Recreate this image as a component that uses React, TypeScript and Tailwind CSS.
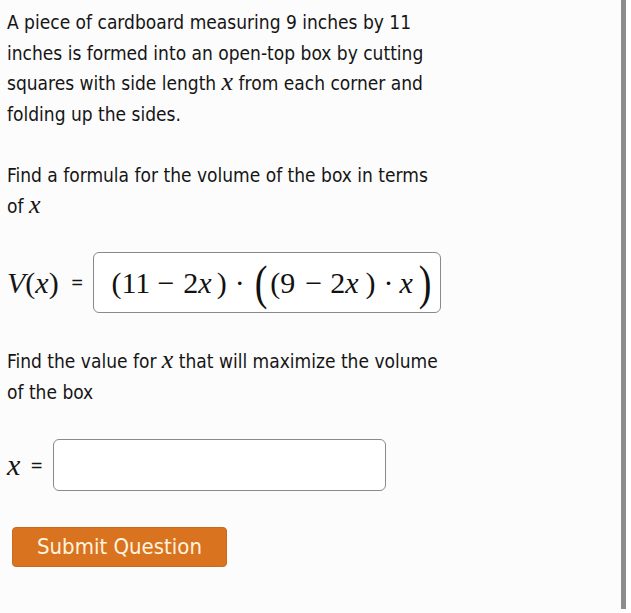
import React from "react";

function MathX() {
  return <i className="font-['Liberation_Serif',serif] text-[26px] italic leading-none">x</i>;
}

export default function App() {
  return (
    <div className="flex h-[613px] w-[631px] bg-white">
      <div className="flex-1 whitespace-nowrap bg-[#fcfcfc] pl-[7px] pt-[7px] text-[19px] leading-[30.5px] text-[#151515] font-['DejaVu_Sans_Condensed','DejaVu_Sans',sans-serif]">
        <p>
          A piece of cardboard measuring 9 inches by 11
          <br />
          inches is formed into an open-top box by cutting
          <br />
          squares with side length <MathX /> from each corner and
          <br />
          folding up the sides.
        </p>

        <p className="mt-[31px]">
          Find a formula for the volume of the box in terms
          <br />
          of <MathX />
        </p>

        {/* V(x) = answer */}
        <div className="mt-[31px] flex items-center">
          <span className="font-['Liberation_Serif',serif] text-[30px] leading-none">
            <i>V</i>(<i>x</i>)
          </span>
          <span className="ml-[12px] text-[17px]">=</span>
          <div className="ml-[10px] flex h-[61px] w-[348px] items-center rounded-[6px] border border-[#8a8a8a] bg-white pl-[17px] font-['Liberation_Serif',serif] text-[30px] leading-none text-[#111]">
            <span>(</span>
            <span>11</span>
            <span className="ml-[7px]">−</span>
            <span className="ml-[9px]">2<i>x</i></span>
            <span className="ml-[5px]">)</span>
            <span className="ml-[8px]">·</span>
            <span className="ml-[10px] inline-block scale-y-[1.25] text-[38px]">(</span>
            <span className="ml-[3px]">(</span>
            <span>9</span>
            <span className="ml-[10px]">−</span>
            <span className="ml-[8px]">2<i>x</i></span>
            <span className="ml-[7px]">)</span>
            <span className="ml-[8px]">·</span>
            <i className="ml-[6px]">x</i>
            <span className="ml-[6px] inline-block scale-y-[1.25] text-[38px]">)</span>
          </div>
        </div>

        <p className="mt-[33px]">
          Find the value for <MathX /> that will maximize the volume
          <br />
          of the box
        </p>

        {/* x = input */}
        <div className="mt-[32px] flex items-center">
          <i className="font-['Liberation_Serif',serif] text-[30px] leading-none">x</i>
          <span className="ml-[10px] text-[17px]">=</span>
          <input
            type="text"
            className="ml-[10px] h-[52px] w-[333px] rounded-[6px] border border-[#8a8a8a] bg-white outline-none"
          />
        </div>

        <button
          type="button"
          className="ml-[5px] mt-[36px] h-[40px] w-[215px] rounded-[4px] border border-[#c96a1c] bg-[#d9731f] text-[22px] text-[#fdf3df] font-['DejaVu_Sans_Condensed','DejaVu_Sans',sans-serif]"
        >
          Submit Question
        </button>
      </div>
      <div className="h-[609px] w-[5px] bg-[#8c8c8c]" />
      <div className="w-[5px]" />
    </div>
  );
}
